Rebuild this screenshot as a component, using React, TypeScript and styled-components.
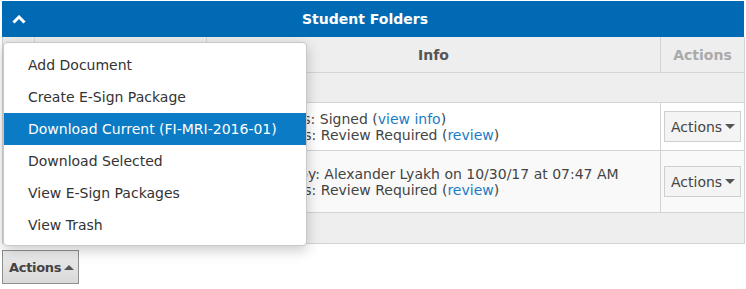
import styled, { createGlobalStyle } from "styled-components";

const GlobalStyle = createGlobalStyle`
  html, body {
    margin: 0;
    padding: 0;
    background: #fff;
    font-family: "DejaVu Sans", Verdana, sans-serif;
    font-size: 14px;
    color: #333;
  }
`;

const Page = styled.div`
  position: relative;
  width: 746px;
  height: 289px;
  padding: 1px 2px 0 2px;
  box-sizing: border-box;
`;

const Panel = styled.div`
  width: 742px;
`;

const TitleBar = styled.div`
  height: 36px;
  background: #006bb4;
  color: #fff;
  display: flex;
  align-items: center;
`;

const Toggle = styled.span`
  width: 34px;
  display: flex;
  justify-content: center;
`;

const Title = styled.div`
  flex: 1;
  text-align: center;
  font-weight: bold;
  font-size: 14px;
  margin-right: 50px;
`;

const Table = styled.table`
  width: 742px;
  border-collapse: collapse;
  table-layout: fixed;
`;

const Th = styled.th<{ $muted?: boolean }>`
  height: 35px;
  background: #eeeeee;
  border: 1px solid #d4d4d4;
  border-top: none;
  font-size: 14px;
  font-weight: bold;
  color: ${(p) => (p.$muted ? "#aaa" : "#555")};
  text-align: center;
  padding: 0;
`;

const GroupRow = styled.tr<{ $h: number }>`
  height: ${(p) => p.$h}px;
  background: #eeeeee;
  td {
    border: 1px solid #d4d4d4;
  }
`;

const Row = styled.tr<{ $h: number; $alt?: boolean }>`
  height: ${(p) => p.$h}px;
  background: ${(p) => (p.$alt ? "#f9f9f9" : "#fff")};
`;

const Td = styled.td<{ $center?: boolean }>`
  border: 1px solid #d4d4d4;
  padding: ${(p) => (p.$center ? "0" : "0 8px")};
  vertical-align: middle;
  line-height: 16px;
  color: #444;
  text-align: ${(p) => (p.$center ? "center" : "left")};
`;

const InfoText = styled.div<{ $indent: number }>`
  white-space: nowrap;
  padding-left: ${(p) => p.$indent}px;
`;

const LinkText = styled.a`
  color: #1a7cc4;
  text-decoration: none;
`;

const RowButton = styled.button`
  display: inline-flex;
  align-items: center;
  gap: 3px;
  height: 31px;
  width: 77px;
  padding: 0 0 0 6px;
  background: #f4f4f4;
  border: 1px solid #cfcfcf;
  font-family: inherit;
  font-size: 14px;
  color: #444;
`;

const Caret = styled.span<{ $up?: boolean }>`
  width: 0;
  height: 0;
  border-left: 5px solid transparent;
  border-right: 5px solid transparent;
  ${(p) =>
    p.$up
      ? "border-bottom: 5px solid #555;"
      : "border-top: 5px solid #555;"}
`;

const FooterButton = styled.button`
  margin-top: 6px;
  display: inline-flex;
  align-items: center;
  gap: 3px;
  height: 34px;
  width: 77px;
  padding: 0 0 0 6px;
  background: linear-gradient(#ececec, #d9d9d9);
  border: 1px solid #8f8f8f;
  font-family: inherit;
  font-size: 13px;
  font-weight: bold;
  letter-spacing: -0.3px;
  color: #444;
`;

const Menu = styled.ul`
  position: absolute;
  left: 3px;
  top: 42px;
  width: 304px;
  margin: 0;
  padding: 6px 0 4px;
  list-style: none;
  background: #fff;
  border: 1px solid #c8c8c8;
  border-radius: 4px;
  box-sizing: border-box;
  box-shadow: 0 4px 14px rgba(0, 0, 0, 0.22);
`;

const MenuItem = styled.li<{ $active?: boolean }>`
  height: 32px;
  display: flex;
  align-items: center;
  padding-left: 24px;
  font-size: 14px;
  white-space: nowrap;
  color: ${(p) => (p.$active ? "#fff" : "#333")};
  background: ${(p) => (p.$active ? "#0a7bc4" : "transparent")};
`;

const menuItems = [
  "Add Document",
  "Create E-Sign Package",
  "Download Current (FI-MRI-2016-01)",
  "Download Selected",
  "View E-Sign Packages",
  "View Trash",
];

const App = () => {
  return (
    <>
      <GlobalStyle />
      <Page>
        <Panel>
          <TitleBar>
            <Toggle>
              <svg width="14" height="9" viewBox="0 0 14 9">
                <path d="M1.5 7.5 L7 2 L12.5 7.5" stroke="#fff" strokeWidth="3" fill="none" />
              </svg>
            </Toggle>
            <Title>Student Folders</Title>
          </TitleBar>
          <Table>
            <colgroup>
              <col style={{ width: 32 }} />
              <col style={{ width: 172 }} />
              <col style={{ width: 454 }} />
              <col style={{ width: 84 }} />
            </colgroup>
            <thead>
              <tr>
                <Th></Th>
                <Th>Name</Th>
                <Th>Info</Th>
                <Th $muted>Actions</Th>
              </tr>
            </thead>
            <tbody>
              <GroupRow $h={30}>
                <td colSpan={4}></td>
              </GroupRow>
              <Row $h={48}>
                <Td></Td>
                <Td>Consent Form</Td>
                <Td>
                  <InfoText $indent={51}>
                    Status: Signed (<LinkText>view info</LinkText>)
                  </InfoText>
                  <InfoText $indent={52}>
                    Status: Review Required (<LinkText>review</LinkText>)
                  </InfoText>
                </Td>
                <Td $center>
                  <RowButton>
                    Actions <Caret />
                  </RowButton>
                </Td>
              </Row>
              <Row $h={62} $alt>
                <Td></Td>
                <Td>MRI Report</Td>
                <Td>
                  <InfoText $indent={13}>
                    Uploaded by: Alexander Lyakh on 10/30/17 at 07:47 AM
                  </InfoText>
                  <InfoText $indent={52}>
                    Status: Review Required (<LinkText>review</LinkText>)
                  </InfoText>
                </Td>
                <Td $center>
                  <RowButton>
                    Actions <Caret />
                  </RowButton>
                </Td>
              </Row>
              <GroupRow $h={31}>
                <td colSpan={4}></td>
              </GroupRow>
            </tbody>
          </Table>
          <FooterButton>
            Actions <Caret $up />
          </FooterButton>
        </Panel>
        <Menu>
          {menuItems.map((item) => (
            <MenuItem key={item} $active={item.startsWith("Download Current")}>
              {item}
            </MenuItem>
          ))}
        </Menu>
      </Page>
    </>
  );
};

export default App;
